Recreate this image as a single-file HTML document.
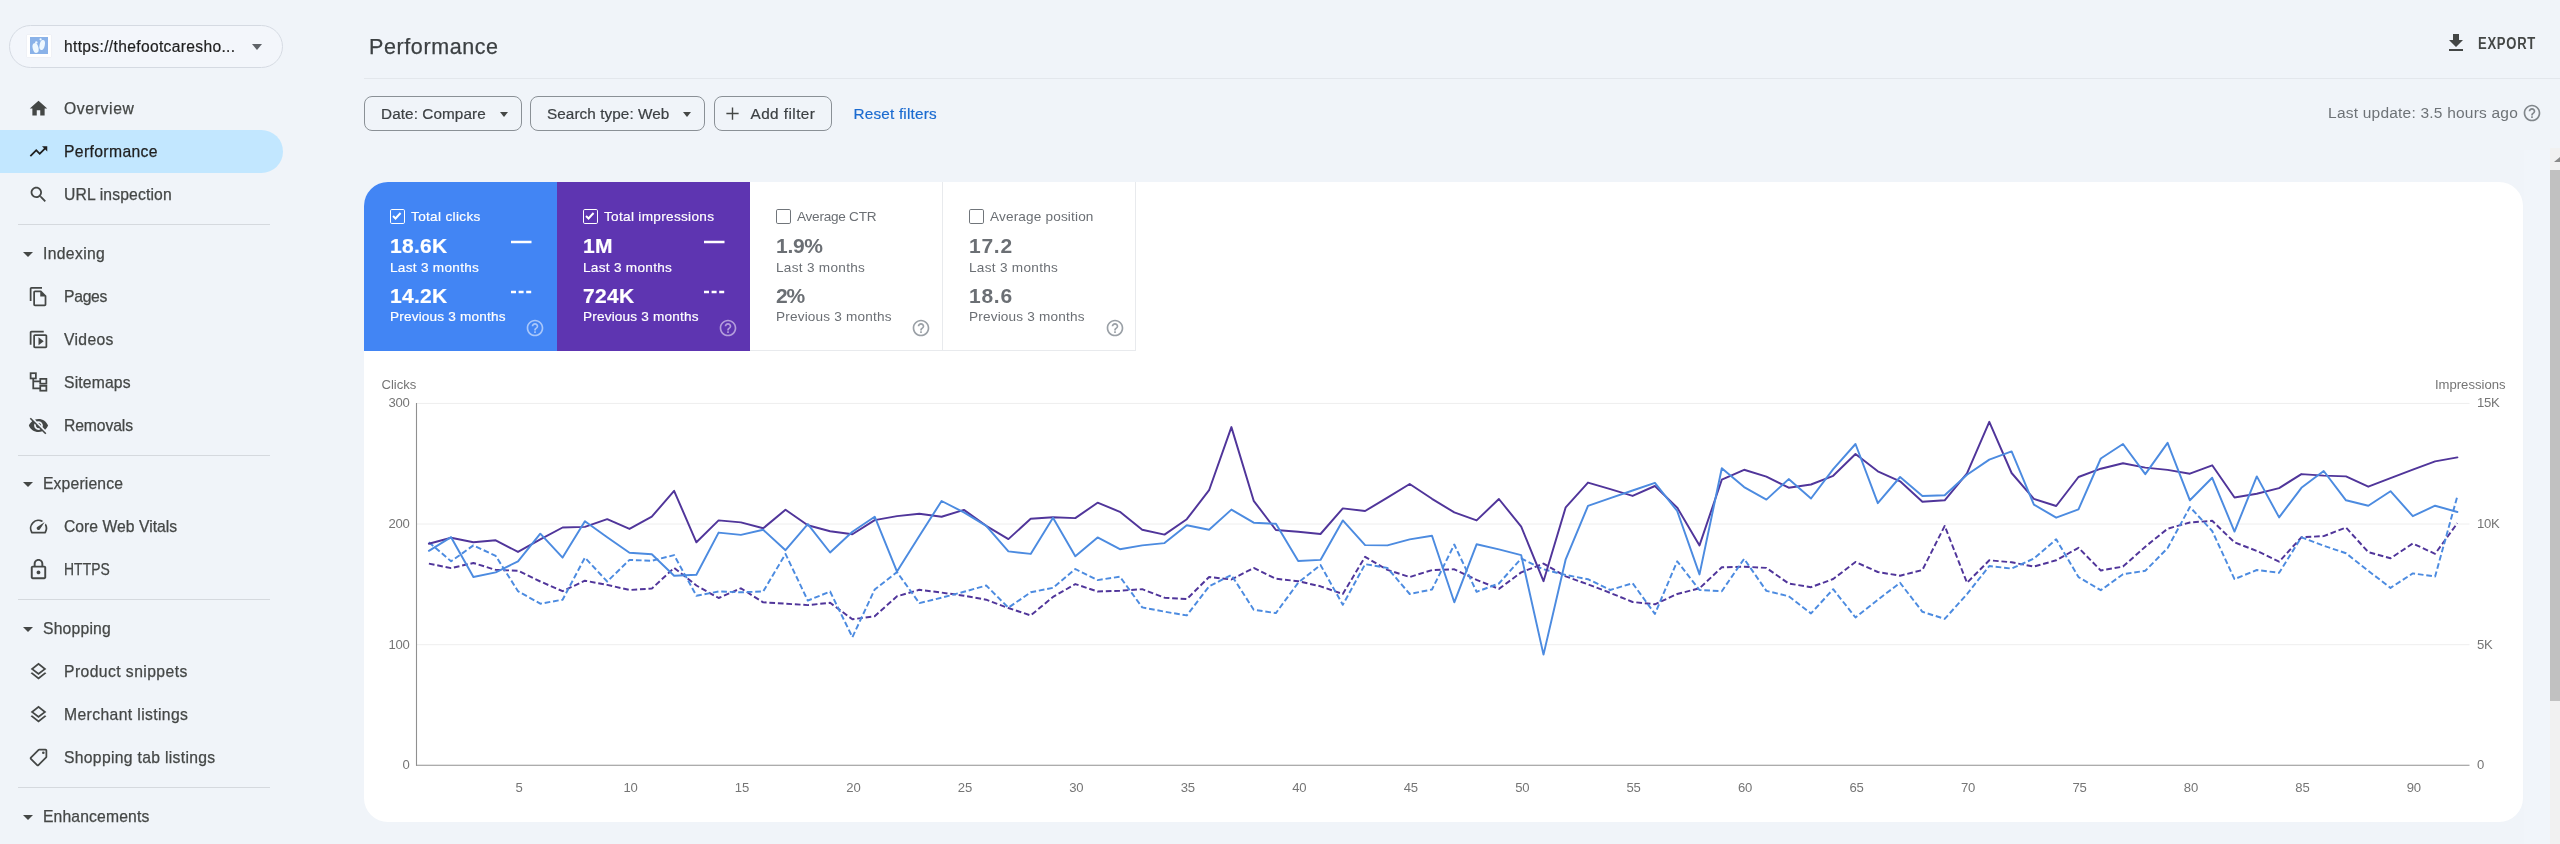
<!DOCTYPE html>
<html lang="en"><head><meta charset="utf-8"><title>Performance</title>
<style>
*{box-sizing:border-box;margin:0;padding:0}
html,body{width:2560px;height:844px;overflow:hidden;background:#f0f4f9;font-family:"Liberation Sans",sans-serif;color:#444746}
.abs{position:absolute}
#side{position:absolute;left:0;top:0;width:300px;height:844px;will-change:transform}
.prop{position:absolute;left:9px;top:25px;width:274px;height:43px;border:1px solid #d5dae2;border-radius:22px;background:#f3f6fb}
.prop .fav{position:absolute;left:17px;top:8.500px;width:24px;height:22.500px;background:#fff;box-shadow:0 0 1px #d8dce2}
.prop .fav svg{position:absolute;left:3px;top:2.700px;width:18px;height:17px}
.prop .t{position:absolute;left:54px;top:0;line-height:41px;font-size:15.6px;color:#1f1f1f;white-space:nowrap;letter-spacing:0.34px;-webkit-text-stroke:0.2px #1f1f1f}
.prop .car{position:absolute;left:242px;top:18px;width:0;height:0;border-left:5.5px solid transparent;border-right:5.5px solid transparent;border-top:6px solid #5f6368}
.nav{position:absolute;left:0;width:283px;height:43px;border-radius:0 22px 22px 0}
.nav.sel{background:#c2e7ff}
.nav .l{position:absolute;left:64px;top:0;line-height:43px;font-size:15.7px;color:#444746;white-space:nowrap;-webkit-text-stroke:0.25px #444746}
.nav.sel .l{color:#1f1f1f;-webkit-text-stroke:0.25px #1f1f1f}
.nav svg{position:absolute;left:28px;top:11px;width:21px;height:21px;fill:#444746}
.nav.sel svg{fill:#1f1f1f}
.sec{position:absolute;left:0;width:283px;height:30px}
.sec .l{position:absolute;left:43px;top:1px;line-height:30px;font-size:15.7px;color:#444746;white-space:nowrap;-webkit-text-stroke:0.25px #444746}
.sec .car{position:absolute;left:23px;top:13.500px;width:0;height:0;border-left:5px solid transparent;border-right:5px solid transparent;border-top:5px solid #444746}
.div{position:absolute;left:18px;width:252px;height:1px;background:#d5d9de}
#main{position:absolute;left:0;top:0;width:2560px;height:844px;pointer-events:none;will-change:transform}
.title{position:absolute;left:369px;top:28.500px;font-size:21.5px;line-height:36px;color:#3c4043;white-space:nowrap;letter-spacing:0.6px;-webkit-text-stroke:0.25px #3c4043}
.hline{position:absolute;left:364px;top:78px;width:2196px;height:1px;background:#e3e7ec}
.chip{position:absolute;top:96px;height:35px;border:1px solid #8a9096;border-radius:8px;font-size:15.3px;line-height:33px;color:#3c4043;white-space:nowrap;-webkit-text-stroke:0.2px #3c4043}
.chip .car{position:absolute;top:14.500px;width:0;height:0;border-left:4.5px solid transparent;border-right:4.5px solid transparent;border-top:5px solid #444746}
.reset{position:absolute;left:853.500px;top:96px;line-height:35px;font-size:15.3px;color:#1b6bd0;white-space:nowrap;letter-spacing:0.2px;-webkit-text-stroke:0.2px #1b6bd0}
.export{position:absolute;left:2478px;top:33.500px;line-height:20px;font-size:16px;font-weight:bold;letter-spacing:0.9px;color:#444746;white-space:nowrap;transform:scaleX(0.815);transform-origin:0 0}
.lastup{position:absolute;right:42px;top:103px;line-height:20px;font-size:15.5px;color:#6e7377;white-space:nowrap;letter-spacing:0.21px}
.card{position:absolute;left:364px;top:181.500px;width:2159px;height:640px;background:#fff;border-radius:24px;overflow:hidden}
.rband{position:absolute;left:2524px;top:150px;width:26px;height:694px;background:#f1f5fa}
.sb{position:absolute;left:2550px;top:148px;width:10px;height:696px;background:#f1f1f1}
.sb .th{position:absolute;left:0;top:22px;width:10px;height:531px;background:#c1c1c1}
.sb .ar{position:absolute;left:4px;top:9px;width:0;height:0;border-left:6px solid transparent;border-right:0 solid transparent;border-bottom:5px solid #8a8a8a}
.m{position:absolute;top:0;width:193px;height:169px}
.m .cb{position:absolute;left:25.500px;top:27px;width:15px;height:15px;border:1.800px solid #fff;border-radius:1.800px}
.m .lab{position:absolute;left:47px;top:25.500px;line-height:20px;font-size:13.6px;white-space:nowrap}
.m .v1{position:absolute;left:26px;top:50.500px;line-height:28px;font-size:21px;font-weight:bold;white-space:nowrap}
.m .s1{position:absolute;left:26px;top:76.300px;line-height:20px;font-size:13.6px;white-space:nowrap}
.m .v2{position:absolute;left:26px;top:100.500px;line-height:28px;font-size:21px;font-weight:bold;white-space:nowrap}
.m .s2{position:absolute;left:26px;top:125.300px;line-height:20px;font-size:13.6px;white-space:nowrap}
.m svg.h{position:absolute;left:161px;top:136.500px;width:20px;height:20px}
.m.on{color:#fff;-webkit-text-stroke:0.2px #fff}
.m.off{color:#6b6f74;border-right:1px solid #e8eaed;border-bottom:1px solid #e8eaed}
.m.off .cb{border-color:#70757a}
.m svg.ln{position:absolute;left:147px;width:21px;height:4px}
svg text{font-family:"Liberation Sans",sans-serif}
</style></head>
<body>
<div id="side">
<div class="prop"><span class="fav"><svg viewBox="0 0 18 17"><rect width="18" height="17" fill="#8ab2e8"/><g fill="#eef8ff"><ellipse cx="5.600" cy="11" rx="2.900" ry="5" transform="rotate(-14 5.600 11)"/><ellipse cx="12.200" cy="8" rx="2.600" ry="5" transform="rotate(12 12.200 8)"/><circle cx="6.300" cy="5.400" r="1.200"/><circle cx="10.600" cy="2.300" r="1.100"/></g></svg></span><span class="t">https://thefootcaresho...</span><span class="car"></span></div>
<div class="nav" style="top:86.5px"><svg viewBox="0 0 24 24" style=""><path d="M10 20v-6h4v6h5v-8h3L12 3 2 12h3v8z"/></svg><span class="l" style="letter-spacing:0.64px">Overview</span></div>
<div class="nav sel" style="top:129.5px"><svg viewBox="0 0 24 24" style=""><path d="M16 6l2.29 2.29-4.88 4.88-4-4L2 16.59 3.41 18l6-6 4 4 6.3-6.29L22 12V6z"/></svg><span class="l" style="letter-spacing:0.375px">Performance</span></div>
<div class="nav" style="top:172.5px"><svg viewBox="0 0 24 24" style=""><path d="M15.5 14h-.79l-.28-.27C15.41 12.59 16 11.11 16 9.5 16 5.91 13.09 3 9.5 3S3 5.91 3 9.5 5.91 16 9.5 16c1.61 0 3.09-.59 4.23-1.57l.27.28v.79l5 4.99L20.49 19l-4.99-5zm-6 0C7.01 14 5 11.99 5 9.5S7.01 5 9.5 5 14 7.01 14 9.5 11.99 14 9.5 14z"/></svg><span class="l" style="letter-spacing:0.14px">URL inspection</span></div>
<div class="div" style="top:224px"></div>
<div class="sec" style="top:238px"><span class="car"></span><span class="l" style="letter-spacing:0.35px">Indexing</span></div>
<div class="nav" style="top:274.5px"><svg viewBox="0 0 24 24" style=""><path d="M16 1H4c-1.1 0-2 .9-2 2v14h2V3h12V1zm-1 4H8c-1.1 0-1.990.9-1.990 2L6 21c0 1.1.89 2 1.990 2H19c1.1 0 2-.9 2-2V11l-6-6zM8 21V7h6v5h5v9H8z"/></svg><span class="l" style="letter-spacing:-0.275px">Pages</span></div>
<div class="nav" style="top:317.5px"><svg viewBox="0 0 24 24" style="transform:scaleY(-1)"><path d="M4 6H2v14c0 1.1.9 2 2 2h14v-2H4V6zm16-4H8c-1.1 0-2 .9-2 2v12c0 1.1.9 2 2 2h12c1.1 0 2-.9 2-2V4c0-1.1-.9-2-2-2zm0 14H8V4h12v12zM12 5.500v9l6-4.500z"/></svg><span class="l" style="letter-spacing:0.35px">Videos</span></div>
<div class="nav" style="top:360.5px"><svg viewBox="0 0 24 24" style="transform:translateY(-1px)"><g fill="none" stroke="#444746" stroke-width="2"><rect x="3" y="2.500" width="6" height="6"/><rect x="14" y="9" width="7" height="5.500"/><rect x="14" y="17" width="7" height="5.500"/><path d="M6 8.500V19.750H14M6 11.750H14"/></g></svg><span class="l" style="letter-spacing:0.17px">Sitemaps</span></div>
<div class="nav" style="top:403.5px"><svg viewBox="0 0 24 24" style=""><path d="M12 7c2.760 0 5 2.240 5 5 0 .65-.13 1.260-.36 1.830l2.920 2.920c1.510-1.260 2.700-2.890 3.430-4.750-1.730-4.390-6-7.500-11-7.500-1.400 0-2.740.25-3.980.7l2.160 2.160C10.740 7.130 11.350 7 12 7zM2 4.270l2.280 2.280.46.46C3.080 8.300 1.780 10.020 1 12c1.730 4.390 6 7.500 11 7.500 1.550 0 3.030-.3 4.380-.84l.42.42L19.730 22 21 20.730 3.270 3 2 4.270zM7.530 9.800l1.550 1.550c-.05.21-.08.43-.08.65 0 1.660 1.340 3 3 3 .22 0 .44-.03.65-.08l1.550 1.550c-.67.33-1.410.53-2.200.53-2.760 0-5-2.240-5-5 0-.79.2-1.530.53-2.200zm4.310-.78l3.150 3.150.02-.16c0-1.660-1.340-3-3-3l-.17.010z"/></svg><span class="l" style="letter-spacing:-0.11px">Removals</span></div>
<div class="div" style="top:455px"></div>
<div class="sec" style="top:468px"><span class="car"></span><span class="l" style="letter-spacing:0.155px">Experience</span></div>
<div class="nav" style="top:504.5px"><svg viewBox="0 0 24 24" style=""><path d="M20.380 8.570l-1.230 1.850a8 8 0 0 1-.22 7.580H5.070A8 8 0 0 1 15.580 6.850l1.850-1.230A10 10 0 0 0 3.350 19a2 2 0 0 0 1.720 1h13.850a2 2 0 0 0 1.740-1 10 10 0 0 0-.27-10.440zm-9.790 6.840a2 2 0 0 0 2.830 0l5.660-8.490-8.490 5.660a2 2 0 0 0 0 2.830z"/></svg><span class="l" style="letter-spacing:0.03px">Core Web Vitals</span></div>
<div class="nav" style="top:547.5px"><svg viewBox="0 0 24 24" style="transform:scale(1.1)"><path d="M18 8h-1V6c0-2.760-2.240-5-5-5S7 3.240 7 6v2H6c-1.100 0-2 .9-2 2v10c0 1.100.9 2 2 2h12c1.100 0 2-.9 2-2V10c0-1.100-.9-2-2-2zM9 6c0-1.660 1.340-3 3-3s3 1.340 3 3v2H9V6zm9 14H6V10h12v10zm-6-3c1.100 0 2-.9 2-2s-.9-2-2-2-2 .9-2 2 .9 2 2 2z"/></svg><span class="l" style="letter-spacing:0.1px;transform:scaleX(0.885);transform-origin:0 50%">HTTPS</span></div>
<div class="div" style="top:599px"></div>
<div class="sec" style="top:613px"><span class="car"></span><span class="l" style="letter-spacing:0.21px">Shopping</span></div>
<div class="nav" style="top:649.5px"><svg viewBox="0 0 24 24" style=""><path d="M11.990 18.540l-7.370-5.730L3 14.070l9 7 9-7-1.630-1.270-7.380 5.740zM12 16l7.360-5.730L21 9l-9-7-9 7 1.630 1.270L12 16zm0-11.470L17.740 9 12 13.470 6.260 9 12 4.530z"/></svg><span class="l" style="letter-spacing:0.43px">Product snippets</span></div>
<div class="nav" style="top:692.5px"><svg viewBox="0 0 24 24" style=""><path d="M11.990 18.540l-7.370-5.730L3 14.070l9 7 9-7-1.630-1.270-7.380 5.740zM12 16l7.360-5.730L21 9l-9-7-9 7 1.630 1.270L12 16zm0-11.470L17.740 9 12 13.470 6.260 9 12 4.530z"/></svg><span class="l" style="letter-spacing:0.39px">Merchant listings</span></div>
<div class="nav" style="top:735.5px"><svg viewBox="0 0 24 24" style=""><g transform="translate(24,0) scale(-1,1)"><path d="M21.410 11.410l-8.830-8.830C12.210 2.210 11.700 2 11.170 2H4c-1.100 0-2 .9-2 2v7.170c0 .53.21 1.040.59 1.410l8.830 8.830c.78.78 2.050.78 2.830 0l7.170-7.170c.78-.78.78-2.040-.01-2.830zM12.830 20L4 11.170V4h7.170L20 12.830 12.830 20z"/><circle cx="6.500" cy="6.500" r="1.500"/></g></svg><span class="l" style="letter-spacing:0.32px">Shopping tab listings</span></div>
<div class="div" style="top:787px"></div>
<div class="sec" style="top:801px"><span class="car"></span><span class="l" style="letter-spacing:0.15px">Enhancements</span></div>

</div>
<div id="main">
<div class="title">Performance</div>
<div class="hline"></div>
<svg class="abs" style="left:2444px;top:31px;width:24px;height:24px" viewBox="0 0 24 24" fill="#444746"><path d="M19 9h-4V3H9v6H5l7 7 7-7zM5 18v2h14v-2H5z"/></svg><div class="export">EXPORT</div>
<div class="chip" style="left:364px;width:158px;padding-left:16px;letter-spacing:0.08px">Date: Compare<span class="car" style="left:135px"></span></div>
<div class="chip" style="left:530px;width:175px;padding-left:16px;letter-spacing:0.07px">Search type: Web<span class="car" style="left:152px"></span></div>
<div class="chip" style="left:714px;width:118px;padding-left:35.500px;letter-spacing:0.45px">Add filter<svg class="abs" style="left:6.500px;top:6px;width:21px;height:21px" viewBox="0 0 24 24" fill="#444746"><path d="M19 12.800h-6.200V19h-1.600v-6.200H5v-1.600h6.200V5h1.600v6.200H19z"/></svg></div>
<div class="reset">Reset filters</div>
<div class="lastup">Last update: 3.5 hours ago</div><svg class="abs" style="left:2522px;top:103px;width:20px;height:20px" viewBox="0 0 24 24" fill="#80868b"><path d="M11 18h2v-2h-2v2zm1-16C6.480 2 2 6.480 2 12s4.480 10 10 10 10-4.480 10-10S17.520 2 12 2zm0 18c-4.410 0-8-3.590-8-8s3.590-8 8-8 8 3.590 8 8-3.590 8-8 8zm0-14c-2.210 0-4 1.790-4 4h2c0-1.100.9-2 2-2s2 .9 2 2c0 2-3 1.750-3 5h2c0-2.250 3-2.500 3-5 0-2.210-1.790-4-4-4z"/></svg>
<div class="rband"></div><div class="sb"><span class="ar"></span><span class="th"></span></div>
<div class="card"><svg class="abs" style="left:0;top:-0.500px" width="2159" height="641" viewBox="364 181 2159 641">
<line x1="416" x2="2469.500" y1="403.4" y2="403.4" stroke="#eeeeee" stroke-width="1"/>
<line x1="416" x2="2469.500" y1="524.0" y2="524.0" stroke="#eeeeee" stroke-width="1"/>
<line x1="416" x2="2469.500" y1="644.7" y2="644.7" stroke="#eeeeee" stroke-width="1"/>
<line x1="416.500" x2="416.500" y1="403" y2="765.800" stroke="#909090" stroke-width="1.100"/>
<line x1="416" x2="2469.500" y1="765.300" y2="765.300" stroke="#909090" stroke-width="1.100"/>
<g font-size="13.100" fill="#757575" letter-spacing="-0.250">
<text x="381.500" y="389.400" letter-spacing="0">Clicks</text><text x="2505.500" y="389.400" text-anchor="end" letter-spacing="0">Impressions</text>
<text x="409.600" y="407.4" text-anchor="end">300</text><text x="409.600" y="528.0" text-anchor="end">200</text><text x="409.600" y="648.7" text-anchor="end">100</text><text x="409.600" y="769.3" text-anchor="end">0</text><text x="2477" y="407.3">15K</text><text x="2477" y="527.9">10K</text><text x="2477" y="648.6">5K</text><text x="2477" y="769.2">0</text>
<text x="519.0" y="792" text-anchor="middle">5</text><text x="630.5" y="792" text-anchor="middle">10</text><text x="741.9" y="792" text-anchor="middle">15</text><text x="853.4" y="792" text-anchor="middle">20</text><text x="964.9" y="792" text-anchor="middle">25</text><text x="1076.3" y="792" text-anchor="middle">30</text><text x="1187.8" y="792" text-anchor="middle">35</text><text x="1299.2" y="792" text-anchor="middle">40</text><text x="1410.7" y="792" text-anchor="middle">45</text><text x="1522.2" y="792" text-anchor="middle">50</text><text x="1633.6" y="792" text-anchor="middle">55</text><text x="1745.1" y="792" text-anchor="middle">60</text><text x="1856.5" y="792" text-anchor="middle">65</text><text x="1968.0" y="792" text-anchor="middle">70</text><text x="2079.5" y="792" text-anchor="middle">75</text><text x="2190.9" y="792" text-anchor="middle">80</text><text x="2302.4" y="792" text-anchor="middle">85</text><text x="2413.8" y="792" text-anchor="middle">90</text></g>
<polyline fill="none" stroke="#50359a" stroke-width="1.950" stroke-dasharray="5.700,2.800" stroke-linejoin="round" points="428.9,563.6 451.1,568.1 473.4,563.0 495.7,569.9 518.0,570.7 540.3,581.5 562.6,591.2 584.9,580.7 607.2,584.9 629.5,590.0 651.8,588.6 674.1,567.9 696.4,585.5 718.6,598.0 740.9,588.3 763.2,602.3 785.5,603.7 807.8,605.1 830.1,602.8 852.4,619.3 874.7,616.2 897.0,596.3 919.3,589.8 941.6,592.6 963.9,595.7 986.2,599.7 1008.4,608.0 1030.7,615.4 1053.0,596.9 1075.3,584.1 1097.6,591.5 1119.9,590.7 1142.2,589.2 1164.5,597.7 1186.8,599.1 1209.1,577.0 1231.4,579.5 1253.7,567.9 1275.9,578.7 1298.2,581.2 1320.5,586.3 1342.8,594.0 1365.1,556.8 1387.4,569.9 1409.7,577.0 1432.0,570.1 1454.3,569.3 1476.6,579.8 1498.9,588.9 1521.2,572.4 1543.5,563.6 1565.7,576.4 1588.0,584.4 1610.3,592.9 1632.6,602.0 1654.9,604.3 1677.2,594.0 1699.5,588.3 1721.8,567.3 1744.1,566.7 1766.4,567.9 1788.7,583.5 1811.0,587.2 1833.2,579.0 1855.5,562.0 1877.8,572.0 1900.1,575.7 1922.4,570.0 1944.7,525.9 1967.0,582.8 1989.3,560.3 2011.6,562.3 2033.9,566.6 2056.2,560.3 2078.5,547.8 2100.8,570.5 2123.0,566.6 2145.3,546.7 2167.6,528.7 2189.9,522.5 2212.2,520.8 2234.5,542.4 2256.8,550.9 2279.1,561.7 2301.4,537.3 2323.7,536.1 2346.0,527.6 2368.3,552.1 2390.5,558.3 2412.8,543.5 2435.1,553.8 2457.4,523.1"/>
<polyline fill="none" stroke="#4c8be0" stroke-width="1.950" stroke-dasharray="5.700,2.800" stroke-linejoin="round" points="428.9,542.3 451.1,561.3 473.4,545.4 495.7,555.9 518.0,591.2 540.3,603.7 562.6,599.7 584.9,557.6 607.2,581.5 629.5,559.9 651.8,560.8 674.1,555.1 696.4,595.7 718.6,591.5 740.9,592.3 763.2,591.5 785.5,553.9 807.8,600.6 830.1,591.5 852.4,637.2 874.7,589.5 897.0,572.1 919.3,603.1 941.6,597.7 963.9,591.8 986.2,585.5 1008.4,607.7 1030.7,592.3 1053.0,587.8 1075.3,569.0 1097.6,580.1 1119.9,576.7 1142.2,607.4 1164.5,611.7 1186.8,615.4 1209.1,586.3 1231.4,575.0 1253.7,609.7 1275.9,613.1 1298.2,582.7 1320.5,565.0 1342.8,604.8 1365.1,564.2 1387.4,567.9 1409.7,594.0 1432.0,589.5 1454.3,544.5 1476.6,591.8 1498.9,583.5 1521.2,558.5 1543.5,569.3 1565.7,575.0 1588.0,579.2 1610.3,590.0 1632.6,583.2 1654.9,613.9 1677.2,561.3 1699.5,590.0 1721.8,591.2 1744.1,558.8 1766.4,590.9 1788.7,596.3 1811.0,613.4 1833.2,589.2 1855.5,617.5 1877.8,599.8 1900.1,582.8 1922.4,611.8 1944.7,618.9 1967.0,594.1 1989.3,566.0 2011.6,568.6 2033.9,558.6 2056.2,539.3 2078.5,577.1 2100.8,590.2 2123.0,574.2 2145.3,570.8 2167.6,548.1 2189.9,507.0 2212.2,531.0 2234.5,579.1 2256.8,570.0 2279.1,572.8 2301.4,537.3 2323.7,545.8 2346.0,553.2 2368.3,570.8 2390.5,587.9 2412.8,573.4 2435.1,576.5 2457.4,496.0"/>
<polyline fill="none" stroke="#50359a" stroke-width="1.950" stroke-linejoin="round" stroke-linecap="round" points="428.9,543.7 451.1,537.7 473.4,542.3 495.7,540.3 518.0,551.9 540.3,539.4 562.6,527.5 584.9,526.9 607.2,519.2 629.5,528.9 651.8,516.7 674.1,490.8 696.4,542.3 718.6,520.4 740.9,522.4 763.2,528.3 785.5,509.7 807.8,525.2 830.1,531.2 852.4,534.3 874.7,520.1 897.0,516.1 919.3,513.8 941.6,516.7 963.9,509.9 986.2,525.8 1008.4,539.1 1030.7,518.7 1053.0,517.2 1075.3,518.1 1097.6,502.7 1119.9,511.8 1142.2,529.8 1164.5,534.6 1186.8,519.2 1209.1,490.2 1231.4,427.1 1253.7,500.8 1275.9,530.0 1298.2,531.8 1320.5,534.0 1342.8,508.4 1365.1,511.0 1387.4,497.6 1409.7,484.0 1432.0,498.8 1454.3,512.4 1476.6,520.4 1498.9,499.0 1521.2,526.6 1543.5,581.2 1565.7,507.3 1588.0,482.6 1610.3,489.1 1632.6,495.9 1654.9,486.0 1677.2,507.6 1699.5,545.4 1721.8,479.7 1744.1,469.8 1766.4,476.6 1788.7,487.7 1811.0,484.5 1833.2,475.8 1855.5,454.0 1877.8,471.3 1900.1,481.3 1922.4,501.7 1944.7,500.3 1967.0,473.3 1989.3,421.8 2011.6,473.0 2033.9,498.9 2056.2,506.0 2078.5,477.0 2100.8,468.7 2123.0,463.3 2145.3,467.6 2167.6,469.9 2189.9,473.7 2212.2,465.3 2234.5,497.5 2256.8,493.8 2279.1,488.1 2301.4,474.1 2323.7,475.6 2346.0,476.4 2368.3,486.7 2390.5,478.1 2412.8,469.6 2435.1,461.4 2457.4,457.4"/>
<polyline fill="none" stroke="#4c8be0" stroke-width="1.950" stroke-linejoin="round" stroke-linecap="round" points="428.9,550.8 451.1,537.2 473.4,577.0 495.7,572.4 518.0,561.3 540.3,533.7 562.6,557.6 584.9,521.2 607.2,537.2 629.5,552.8 651.8,554.2 674.1,575.8 696.4,574.7 718.6,532.6 740.9,534.9 763.2,529.8 785.5,550.2 807.8,524.1 830.1,552.5 852.4,531.8 874.7,516.7 897.0,571.6 919.3,536.0 941.6,501.0 963.9,512.4 986.2,525.8 1008.4,551.4 1030.7,553.9 1053.0,517.8 1075.3,556.2 1097.6,537.4 1119.9,549.2 1142.2,545.4 1164.5,543.1 1186.8,525.2 1209.1,529.8 1231.4,509.6 1253.7,522.7 1275.9,523.8 1298.2,561.0 1320.5,559.9 1342.8,520.4 1365.1,545.1 1387.4,545.4 1409.7,539.4 1432.0,535.7 1454.3,602.3 1476.6,544.3 1498.9,549.4 1521.2,555.1 1543.5,654.6 1565.7,559.3 1588.0,505.9 1610.3,498.2 1632.6,490.5 1654.9,482.8 1677.2,511.0 1699.5,574.4 1721.8,468.3 1744.1,487.1 1766.4,499.6 1788.7,479.1 1811.0,498.5 1833.2,469.2 1855.5,444.0 1877.8,503.2 1900.1,477.0 1922.4,496.0 1944.7,495.2 1967.0,474.7 1989.3,459.6 2011.6,451.4 2033.9,504.6 2056.2,517.7 2078.5,509.4 2100.8,458.5 2123.0,444.0 2145.3,474.1 2167.6,442.9 2189.9,500.3 2212.2,477.8 2234.5,531.6 2256.8,476.4 2279.1,517.4 2301.4,487.8 2323.7,471.0 2346.0,500.3 2368.3,505.7 2390.5,491.2 2412.8,516.2 2435.1,505.7 2457.4,512.0"/>
</svg>
<div class="m on" style="left:0px;background:#4285f4"><span class="cb"><svg viewBox="0 0 12 12" style="position:absolute;left:0;top:0;width:11.600px;height:11.600px"><path d="M2.100 6.200l2.600 2.600 5.200-5.700" fill="none" stroke="#fff" stroke-width="2"/></svg></span><span class="lab" style="letter-spacing:0.33px">Total clicks</span><span class="v1" style="letter-spacing:0.3px">18.6K</span><span class="s1" style="letter-spacing:0.29px">Last 3 months</span><span class="v2" style="letter-spacing:0.3px">14.2K</span><span class="s2" style="letter-spacing:0.18px">Previous 3 months</span><svg class="ln" style="top:58.100px" viewBox="0 0 21 4"><line x1="0" x2="20.500" y1="2" y2="2" stroke="#fff" stroke-width="2.400"/></svg><svg class="ln" style="top:108px" viewBox="0 0 21 4"><line x1="0" x2="20.500" y1="2" y2="2" stroke="#fff" stroke-width="2.400" stroke-dasharray="5,2.600"/></svg><svg class="h" style="left:161px" viewBox="0 0 24 24" fill="#a9c7fa"><path d="M11 18h2v-2h-2v2zm1-16C6.480 2 2 6.480 2 12s4.480 10 10 10 10-4.480 10-10S17.520 2 12 2zm0 18c-4.410 0-8-3.590-8-8s3.590-8 8-8 8 3.590 8 8-3.590 8-8 8zm0-14c-2.210 0-4 1.790-4 4h2c0-1.100.9-2 2-2s2 .9 2 2c0 2-3 1.750-3 5h2c0-2.250 3-2.500 3-5 0-2.210-1.790-4-4-4z"/></svg></div>
<div class="m on" style="left:193px;background:#5e35b1"><span class="cb"><svg viewBox="0 0 12 12" style="position:absolute;left:0;top:0;width:11.600px;height:11.600px"><path d="M2.100 6.200l2.600 2.600 5.200-5.700" fill="none" stroke="#fff" stroke-width="2"/></svg></span><span class="lab" style="letter-spacing:0.31px">Total impressions</span><span class="v1" style="letter-spacing:0.3px">1M</span><span class="s1" style="letter-spacing:0.29px">Last 3 months</span><span class="v2" style="letter-spacing:0.3px">724K</span><span class="s2" style="letter-spacing:0.18px">Previous 3 months</span><svg class="ln" style="top:58.100px" viewBox="0 0 21 4"><line x1="0" x2="20.500" y1="2" y2="2" stroke="#fff" stroke-width="2.400"/></svg><svg class="ln" style="top:108px" viewBox="0 0 21 4"><line x1="0" x2="20.500" y1="2" y2="2" stroke="#fff" stroke-width="2.400" stroke-dasharray="5,2.600"/></svg><svg class="h" style="left:161px" viewBox="0 0 24 24" fill="#b39ddb"><path d="M11 18h2v-2h-2v2zm1-16C6.480 2 2 6.480 2 12s4.480 10 10 10 10-4.480 10-10S17.520 2 12 2zm0 18c-4.410 0-8-3.590-8-8s3.590-8 8-8 8 3.590 8 8-3.590 8-8 8zm0-14c-2.210 0-4 1.790-4 4h2c0-1.100.9-2 2-2s2 .9 2 2c0 2-3 1.750-3 5h2c0-2.250 3-2.500 3-5 0-2.210-1.790-4-4-4z"/></svg></div>
<div class="m off" style="left:386px;background:#fff"><span class="cb"></span><span class="lab" style="letter-spacing:-0.26px">Average CTR</span><span class="v1" style="letter-spacing:-0.3px">1.9%</span><span class="s1" style="letter-spacing:0.29px">Last 3 months</span><span class="v2" style="letter-spacing:-1.2px">2%</span><span class="s2" style="letter-spacing:0.18px">Previous 3 months</span><svg class="h" style="left:160.5px" viewBox="0 0 24 24" fill="#9aa0a6"><path d="M11 18h2v-2h-2v2zm1-16C6.480 2 2 6.480 2 12s4.480 10 10 10 10-4.480 10-10S17.520 2 12 2zm0 18c-4.410 0-8-3.590-8-8s3.590-8 8-8 8 3.590 8 8-3.590 8-8 8zm0-14c-2.210 0-4 1.790-4 4h2c0-1.100.9-2 2-2s2 .9 2 2c0 2-3 1.750-3 5h2c0-2.250 3-2.500 3-5 0-2.210-1.790-4-4-4z"/></svg></div>
<div class="m off" style="left:579px;background:#fff"><span class="cb"></span><span class="lab" style="letter-spacing:0.16px">Average position</span><span class="v1" style="letter-spacing:0.75px">17.2</span><span class="s1" style="letter-spacing:0.29px">Last 3 months</span><span class="v2" style="letter-spacing:0.75px">18.6</span><span class="s2" style="letter-spacing:0.18px">Previous 3 months</span><svg class="h" style="left:161.5px" viewBox="0 0 24 24" fill="#9aa0a6"><path d="M11 18h2v-2h-2v2zm1-16C6.480 2 2 6.480 2 12s4.480 10 10 10 10-4.480 10-10S17.520 2 12 2zm0 18c-4.410 0-8-3.590-8-8s3.590-8 8-8 8 3.590 8 8-3.590 8-8 8zm0-14c-2.210 0-4 1.790-4 4h2c0-1.100.9-2 2-2s2 .9 2 2c0 2-3 1.750-3 5h2c0-2.250 3-2.500 3-5 0-2.210-1.790-4-4-4z"/></svg></div>
</div>

</div>
</body></html>
